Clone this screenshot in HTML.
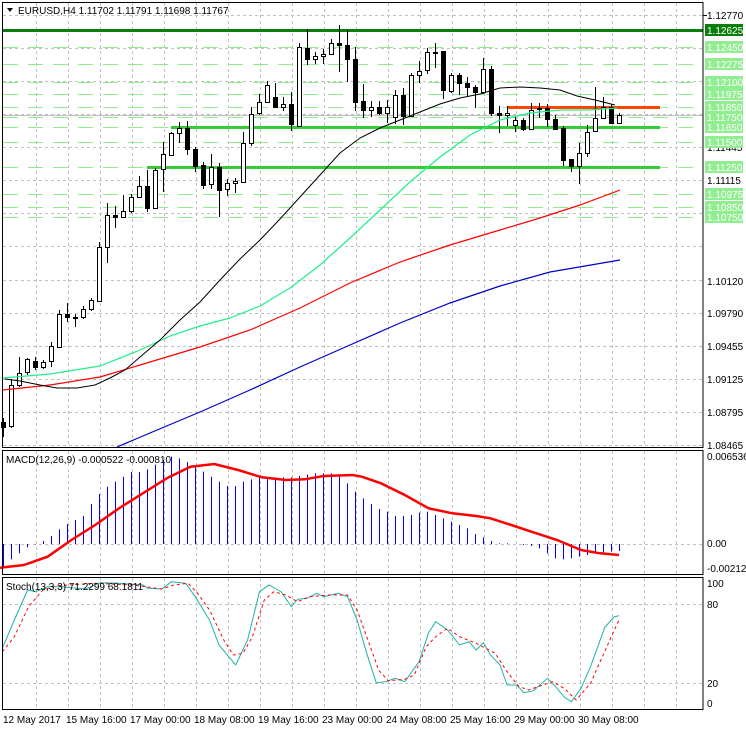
<!DOCTYPE html>
<html><head><meta charset="utf-8"><style>
html,body{margin:0;padding:0;background:#fff;width:746px;height:731px;overflow:hidden}
svg{display:block}
text{font-family:"Liberation Sans",sans-serif;font-size:10px}
</style></head><body>
<svg id="s" width="746" height="731" xmlns="http://www.w3.org/2000/svg">
<g id="grid"></g>
<g id="lv"></g>
<g id="cd"></g>
<g id="ma"></g>
<!-- frames -->
<rect x="2.5" y="2.5" width="700.5" height="445" fill="none" stroke="#000"/>
<rect x="2.5" y="450.5" width="700.5" height="124" fill="none" stroke="#000"/>
<rect x="2.5" y="577.5" width="700.5" height="132" fill="none" stroke="#000"/>
<!-- title -->
<path d="M7 8 L13 8 L10 12 Z" fill="#000"/>
<text x="18" y="14" font-size="10.5">EURUSD,H4  1.11702 1.11791 1.11698 1.11767</text>
<g id="lab"></g>
<text x="6" y="463">MACD(12,26,9) -0.000522 -0.000810</text>
<text x="6" y="590">Stoch(13,3,3) 71.2299 68.1811</text>
<g font-size="10">
<text x="707" y="460">0.006536</text>
<text x="707" y="547">0.00</text>
<text x="707" y="572">-0.002129</text>
<text x="707" y="587">100</text>
<text x="707" y="608">80</text>
<text x="707" y="687">20</text>
<text x="707" y="707">0</text>
</g>
<g font-size="10">
<text x="3" y="723">12 May 2017</text>
<text x="66" y="723">15 May 16:00</text>
<text x="130" y="723">17 May 00:00</text>
<text x="194" y="723">18 May 08:00</text>
<text x="258" y="723">19 May 16:00</text>
<text x="322" y="723">23 May 00:00</text>
<text x="386" y="723">24 May 08:00</text>
<text x="450" y="723">25 May 16:00</text>
<text x="514" y="723">29 May 00:00</text>
<text x="578" y="723">30 May 08:00</text>
</g>
</svg>
<script>
var NS="http://www.w3.org/2000/svg";
function el(p,t,a){var e=document.createElementNS(NS,t);for(var k in a)e.setAttribute(k,a[k]);document.getElementById(p).appendChild(e);return e;}
// vertical grid
for(var x=36;x<700;x+=32){
 el("grid","line",{x1:x+.5,y1:3,x2:x+.5,y2:447,stroke:"#c0c0c0","stroke-dasharray":"3,3"});
 el("grid","line",{x1:x+.5,y1:451,x2:x+.5,y2:574,stroke:"#c0c0c0","stroke-dasharray":"3,3"});
 el("grid","line",{x1:x+.5,y1:578,x2:x+.5,y2:709,stroke:"#c0c0c0","stroke-dasharray":"3,3"});
}
var hy=[15,48,81,114,147,180,213,246,280,313,346,379,412,445];
hy.forEach(function(y){el("grid","line",{x1:3,y1:y+.5,x2:703,y2:y+.5,stroke:"#c0c0c0","stroke-dasharray":"3,3"});});
[544,604,683].forEach(function(y){el("grid","line",{x1:3,y1:y+.5,x2:703,y2:y+.5,stroke:"#c0c0c0","stroke-dasharray":"3,3"});});
// level lines
[47,64,82,94,107,117,127,142,167,194,207,217].forEach(function(y){el("lv","line",{x1:3,y1:y+.5,x2:703,y2:y+.5,stroke:"#90ee90","stroke-dasharray":"15,10"});});
el("lv","line",{x1:3,y1:115.5,x2:703,y2:115.5,stroke:"#c0c0c0"});
el("lv","rect",{x:3,y:29,width:700,height:3,fill:"#0a7d0a"});
el("lv","rect",{x:171,y:126,width:489,height:3,fill:"#32cd32"});
el("lv","rect",{x:147,y:166,width:513,height:3,fill:"#32cd32"});
el("lv","rect",{x:507,y:106,width:153,height:3,fill:"#ff4500"});
// candles: [o,c,h,l]
var C=[[422,427,418,437],[426,385,379,428],[385,373,357,387],[372,359,358,375],[361,367,357,370],[367,362,360,369],[361,346,342,367],[347,314,310,347],[314,317,303,322],[317,317,314,327],[317,309,306,319],[309,300,298,311],[301,247,242,301],[247,215,203,263],[215,217,206,228],[217,211,195,217],[211,197,194,213],[197,186,176,198],[186,208,170,212],[208,170,168,209],[169,154,142,192],[155,133,132,156],[133,128,122,143],[128,149,121,155],[149,166,147,172],[165,185,162,189],[184,167,154,189],[167,190,163,217],[189,183,179,196],[183,181,178,193],[182,143,132,183],[143,114,107,146],[113,102,94,115],[102,85,81,103],[97,107,83,108],[107,104,97,111],[104,124,92,131],[126,47,43,127],[48,59,29,65],[59,56,52,64],[56,54,49,64],[54,43,39,55],[43,45,25,72],[45,59,30,82],[59,102,47,111],[101,110,84,118],[110,107,101,117],[107,113,101,115],[113,107,100,123],[117,95,90,124],[95,116,88,125],[116,75,73,117],[75,71,61,83],[70,52,48,74],[52,53,43,68],[51,90,51,99],[91,75,73,93],[75,83,73,95],[83,87,77,97],[87,92,85,108],[92,69,58,94],[69,113,66,116],[113,115,106,133],[115,113,106,126],[125,120,116,132],[120,129,118,131],[129,110,103,130],[108,109,103,118],[108,119,104,127],[119,129,115,130],[128,160,126,166],[159,166,159,172],[166,153,143,184],[153,132,125,157],[131,118,87,132],[118,107,97,119],[107,123,104,124],[123,115,113,124]];
C.forEach(function(c,k){var x=3+8*k;var o=c[0],cl=c[1],h=c[2],l=c[3];
 el("cd","line",{x1:x+.5,y1:h,x2:x+.5,y2:l,stroke:"#000"});
 var t=Math.min(o,cl),b=Math.max(o,cl);if(b-t<1)b=t+1;
 var white=cl<o;
 el("cd","rect",{x:x-1.5,y:t+.5,width:4,height:b-t,fill:white?"#fff":"#000",stroke:"#000"});
});
function pl(g,pts,col,w,dash){var d=pts.map(function(p,i){return (i?"L":"M")+p[0]+" "+p[1];}).join(" ");var a={d:d,fill:"none",stroke:col,"stroke-width":w};if(dash)a["stroke-dasharray"]=dash;return el(g,"path",a);}
pl("ma",[[117,447],[150,433],[200,412],[250,390],[300,367],[350,345],[400,323],[450,303],[500,286],[550,272],[620,260]],"#0000cd",1.2);
pl("ma",[[3,390],[50,385],[100,377],[150,362],[200,347],[250,330],[300,308],[350,283],[400,262],[450,245],[500,230],[540,218],[580,205],[620,190]],"#ff0000",1.2);
pl("ma",[[3,378],[50,374],[100,366],[140,350],[170,336],[200,326],[230,318],[260,306],[290,288],[320,265],[350,238],[380,210],[410,182],[440,157],[470,135],[500,120],[530,113],[560,110],[590,110],[617,108]],"#1ef08a",1.2);
pl("ma",[[5,379],[20,381],[40,385],[57,388],[77,388],[95,385],[110,378],[125,370],[140,357],[160,340],[180,320],[200,302],[220,280],[240,259],[260,240],[280,219],[300,197],[320,175],[340,153],[360,138],[380,128],[400,120],[420,112],[440,104],[460,98],[480,94],[500,88],[520,87],[540,88],[560,90],[577,96],[595,100],[615,105]],"#000",1);
// MACD histogram
var H=[380,358,340,322,313,303,288,268,252,240,228,192,162,140,125,110,96,96,88,74,60,50,55,66,80,95,110,125,138,138,125,118,112,112,112,112,112,108,104,100,100,100,104,130,155,175,192,207,215,228,228,225,218,215,225,235,245,255,265,282,292,303,310,310,312,315,318,325,340,355,358,355,350,345,340,338,335,333];
H.forEach(function(z,k){var x=3+8*k+.5;var y=440+z/3;el("ma","line",{x1:x,y1:544,x2:x,y2:y,stroke:"#0000ff"});});
function cv(a){return a.map(function(p){return [(p[0]/2.1).toFixed(1),(440+p[1]/3).toFixed(1)];});}
pl("ma",cv([[0,383],[50,375],[100,350],[150,300],[200,255],[250,205],[300,160],[350,115],[400,80],[450,72],[500,90],[550,112],[600,120],[640,118],[680,108],[740,105],[760,110],[800,130],[850,165],[900,205],[950,220],[1000,228],[1030,235],[1080,258],[1120,277],[1170,300],[1220,330],[1260,340],[1300,345]]),"#ff0000",2.5);
pl("ma",cv([[5,625],[30,540],[58,450],[75,455],[100,440],[130,440],[160,445],[180,447],[210,428],[250,430],[300,435],[310,445],[340,447],[360,425],[390,430],[410,470],[440,540],[460,615],[495,675],[520,600],[545,455],[565,435],[590,455],[612,500],[625,478],[645,475],[665,460],[680,470],[710,460],[730,470],[750,540],[770,640],[790,728],[810,725],[830,715],[850,725],[880,665],[900,578],[915,545],[940,570],[965,615],[985,605],[1000,630],[1015,608],[1030,645],[1050,675],[1065,735],[1085,735],[1100,758],[1120,752],[1150,715],[1170,745],[1185,772],[1200,785],[1220,745],[1240,680],[1270,562],[1290,530],[1300,527]]),"#20b2aa",1);
pl("ma",cv([[5,635],[30,590],[60,500],[90,450],[120,437],[200,430],[280,435],[340,447],[365,435],[395,430],[415,460],[440,510],[470,600],[490,645],[510,640],[530,590],[555,480],[575,455],[600,465],[625,485],[650,470],[690,465],[730,465],[750,510],[770,590],[795,690],[815,722],[850,718],[870,705],[895,620],[915,590],[940,565],[965,590],[1000,610],[1040,640],[1065,695],[1090,740],[1110,750],[1140,735],[1160,725],[1185,745],[1210,780],[1240,730],[1265,650],[1290,570],[1300,540]]),"#ff0000",1,"3,3");
// right labels
var G=[[1.12450,47],[1.12275,64],[1.12100,82],[1.11975,94],[1.11850,107],[1.11750,117],[1.11650,127],[1.11500,142],[1.11250,167],[1.10975,194],[1.10850,207],[1.10750,217]];
[["1.12770",15],["1.11445",147],["1.11115",180],["1.10120",281],["1.09790",313],["1.09455",346],["1.09125",379],["1.08795",412],["1.08465",445]].forEach(function(a){var t=el("lab","text",{x:707,y:a[1]+4});t.textContent=a[0];});
G.forEach(function(a){el("lab","rect",{x:705,y:a[1]-6,width:38,height:12,fill:"#90ee90"});var t=el("lab","text",{x:707,y:a[1]+4,fill:"#fff"});t.textContent=a[0].toFixed(5);});
el("lab","rect",{x:705,y:24,width:38,height:12,fill:"#0a7d0a"});
var t=el("lab","text",{x:707,y:34,fill:"#fff"});t.textContent="1.12625";
el("lab","line",{x1:703,y1:15.5,x2:707,y2:15.5,stroke:"#000"});
</script>
</body></html>
